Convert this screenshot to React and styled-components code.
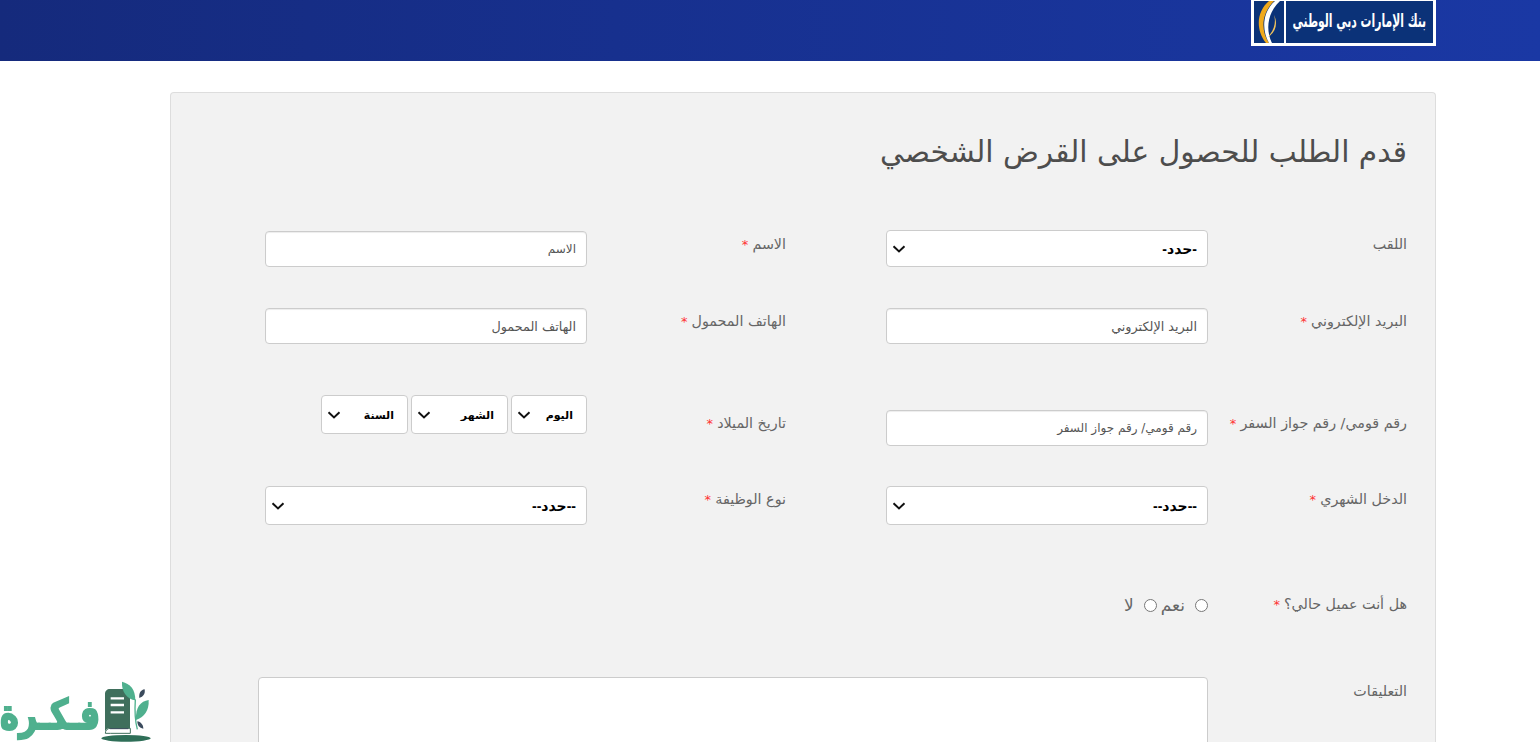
import React from 'react';
import styled, { createGlobalStyle } from 'styled-components';

const chevron = encodeURIComponent(
    '<svg xmlns="http://www.w3.org/2000/svg" width="14" height="8" viewBox="0 0 14 8"><path d="M1.5 1.2 7 6.4l5.5-5.2" fill="none" stroke="#111" stroke-width="2"/></svg>'
);

const GlobalStyle = createGlobalStyle`
    html, body { margin: 0; padding: 0; height: 742px; overflow: hidden; background: #fff; }
    * { box-sizing: border-box; }
    body { font-family: "DejaVu Sans", sans-serif; color: #333; }
`;

const Page = styled.div`
    height: 742px;
    overflow: hidden;
`;

const Header = styled.header`
    height: 61px;
    background: linear-gradient(to right, #152a7c 0%, #17308e 40%, #1a38a4 100%);
    padding-left: 1251px;
`;

const BankLogo = styled.div`
    width: 185px;
    height: 46px;
    display: flex;
    gap: 2px;
    padding: 1px 3px 3px;
    background: #fff;
`;

const Emblem = styled.svg`
    width: 30px;
    height: 42px;
    background: #0b3278;
    flex-shrink: 0;
`;

const BankName = styled.div`
    flex: 1;
    min-width: 0;
    overflow: hidden;
    background: #0b3278;
    color: #fff;
    display: flex;
    align-items: center;
    justify-content: center;
    white-space: nowrap;
`;

const BankNameText = styled.span`
    font-size: 18px;
    font-weight: 700;
    transform: scaleX(0.6);
    margin-top: -3px;
`;

const Card = styled.main`
    margin: 31px 0 0 170px;
    width: 1266px;
    height: 650px;
    overflow: hidden;
    background: #f2f2f2;
    border: 1px solid #ddd;
    border-bottom: none;
    border-radius: 4px 4px 0 0;
    padding: 36px 28px 0 0;
`;

const Title = styled.h1`
    margin: 0 0 57px;
    height: 45px;
    font-size: 29.7px;
    line-height: 45px;
    font-weight: 400;
    color: #4d4d4d;
    white-space: nowrap;
`;

const FormGrid = styled.form`
    display: grid;
    grid-template-columns: 199px 322px 299px 322px;
    grid-template-rows: 77px 87px 91px 100px 91px auto;
`;

const Label = styled.label`
    font-size: 14.3px;
    line-height: 20px;
    padding-top: ${(p) => p.$top ?? 3}px;
    color: #666;
    white-space: nowrap;
    margin-inline-start: ${(p) => (p.$second ? '100px' : 0)};
`;

const Required = styled.span`
    color: #f33;
    font-size: 13px;
`;

const TextInput = styled.input`
    width: 322px;
    height: 36px;
    margin-top: ${(p) => p.$top ?? 0}px;
    border: 1px solid #ccc;
    border-radius: 4px;
    background: #fff;
    box-shadow: inset 0 1px 1px rgba(0, 0, 0, 0.075);
    padding: 0 10px;
    font-family: "DejaVu Sans", sans-serif;
    font-size: ${(p) => p.$size ?? 12.8}px;
    &::placeholder { color: #555; opacity: 1; }
`;

const Select = styled.select`
    appearance: none;
    width: ${(p) => p.$width ?? 322}px;
    height: ${(p) => p.$height ?? 39}px;
    margin-top: ${(p) => p.$top ?? 0}px;
    border: 1px solid #ccc;
    border-radius: 4px;
    background: #fff url("data:image/svg+xml,${chevron}") no-repeat 5px center;
    padding: 0 ${(p) => p.$pad ?? 10}px 0 22px;
    font-family: "Liberation Sans", "DejaVu Sans", sans-serif;
    font-size: ${(p) => p.$size ?? 14}px;
    font-weight: 700;
    color: #000;
`;

const DateRow = styled.div`
    display: flex;
    gap: 3px;
`;

const RadioRow = styled.div`
    display: flex;
    align-items: center;
    height: 20px;
    margin-top: 9px;
    font-size: 17px;
    color: #666;
`;

const Radio = styled.input.attrs({ type: 'radio' })`
    width: 13px;
    height: 13px;
    margin: 0;
`;

const RadioText = styled.span`
    margin-inline: 10px 4px;
`;

const Comments = styled.textarea`
    grid-column: 2 / 5;
    width: 950px;
    height: 200px;
    border: 1px solid #ccc;
    border-radius: 4px;
    background: #fff;
    resize: none;
`;

const FikraBadge = styled.div`
    position: fixed;
    left: 0;
    bottom: 0;
    width: 152px;
    height: 62px;
    display: flex;
    align-items: flex-end;
    justify-content: space-between;
    direction: ltr;
`;

const FikraText = styled.span`
    font-size: 32px;
    line-height: 50px;
    font-weight: 700;
    color: #4fb08e;
    direction: rtl;
    white-space: nowrap;
    -webkit-text-stroke: 1.5px #4fb08e;
    transform: scale(1, 1.3);
    transform-origin: left 78%;
    margin-bottom: -2px;
`;

const FikraIcon = styled.svg`
    width: 52px;
    height: 62px;
    flex-shrink: 0;
`;

const Req = () => <Required> *</Required>;

const App = () => (
    <Page>
        <GlobalStyle />
        <Header>
            <BankLogo>
                <Emblem viewBox="0 0 30 42">
                    <path d="M15 0C3 10 1 28 12 42h3C6 28 8 12 20 0z" fill="#f0a91c" />
                    <path d="M21 0C9 10 7 28 15 42h3C11 28 14 11 26 0z" fill="#fff" />
                    <path d="M20 14c2 6 1 14-6 22 8-5 10-14 6-22z" fill="#f0c35c" />
                </Emblem>
                <BankName dir="rtl">
                    <BankNameText>بنك الإمارات دبي الوطني</BankNameText>
                </BankName>
            </BankLogo>
        </Header>
        <Card dir="rtl">
            <Title>قدم الطلب للحصول على القرض الشخصي</Title>
            <FormGrid>
                <Label>اللقب</Label>
                <Select $height={37} $top={-1}>
                    <option>-حدد-</option>
                </Select>
                <Label $second>
                    الاسم
                    <Req />
                </Label>
                <TextInput $size={12} placeholder="الاسم" />

                <Label>
                    البريد الإلكتروني
                    <Req />
                </Label>
                <TextInput placeholder="البريد الإلكتروني" />
                <Label $second>
                    الهاتف المحمول
                    <Req />
                </Label>
                <TextInput placeholder="الهاتف المحمول" />

                <Label $top={18}>
                    رقم قومي/ رقم جواز السفر
                    <Req />
                </Label>
                <TextInput $top={15} $size={12} placeholder="رقم قومي/ رقم جواز السفر" />
                <Label $second $top={18}>
                    تاريخ الميلاد
                    <Req />
                </Label>
                <DateRow>
                    <Select $width={76} $size={11} $pad={13}><option>اليوم</option></Select>
                    <Select $width={97} $size={11} $pad={13}><option>الشهر</option></Select>
                    <Select $width={87} $size={11} $pad={13}><option>السنة</option></Select>
                </DateRow>

                <Label>
                    الدخل الشهري
                    <Req />
                </Label>
                <Select><option>--حدد--</option></Select>
                <Label $second>
                    نوع الوظيفة
                    <Req />
                </Label>
                <Select><option>--حدد--</option></Select>

                <Label $top={8}>
                    هل أنت عميل حالي؟
                    <Req />
                </Label>
                <RadioRow>
                    <Radio name="customer" />
                    <RadioText>نعم</RadioText>
                    <Radio name="customer" />
                    <RadioText>لا</RadioText>
                </RadioRow>
                <span />
                <span />

                <Label $top={4}>التعليقات</Label>
                <Comments />
            </FormGrid>
        </Card>
        <FikraBadge>
            <FikraText>فـكـرة</FikraText>
            <FikraIcon viewBox="300 30 156 186">
                <ellipse cx="378" cy="205" rx="74" ry="10" fill="#2f6f58" />
                <path d="M330 57h48c7 0 12 5 12 12v106h-60c-9 0-15 6-15 14V72c0-9 6-15 15-15z" fill="#3f6f5c" />
                <path d="M316 190c0-9 6-15 15-15h60v15H331z" fill="#fff" stroke="#3f6f5c" strokeWidth="3" />
                <path d="M330 176h55" stroke="#3b4a5c" strokeWidth="3" />
                <path d="M332 85h40M332 105h40M332 127h40" stroke="#fff" strokeWidth="7" />
                <path d="M412 178c-8-30-8-60-6-90" stroke="#4fb08e" strokeWidth="4" fill="none" />
                <path d="M366 35c24 6 40 22 40 56-24-4-42-24-40-56z" fill="#4fb08e" />
                <path d="M446 90c-24 4-40 20-38 60 24-8 40-28 38-60z" fill="#4fb08e" />
                <path d="M434 58c-12 2-18 12-16 26 12-4 18-12 16-26z" fill="#3b4a5c" />
                <path d="M412 154c10 2 18 10 18 22-12-2-18-10-18-22z" fill="#3b4a5c" />
            </FikraIcon>
        </FikraBadge>
    </Page>
);

export default App;
